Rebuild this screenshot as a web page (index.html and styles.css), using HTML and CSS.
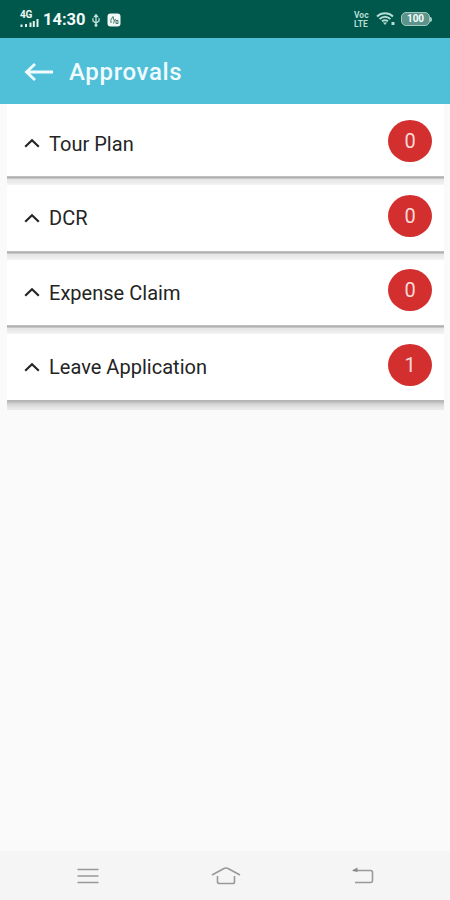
FILE: index.html
```html
<!DOCTYPE html>
<html lang="en">
<head>
<meta charset="utf-8">
<title>Approvals</title>
<link rel="stylesheet" href="styles.css">
</head>
<body>
<div class="screen">
  <div class="status">
    <div class="signal">
      <span class="net">4G</span>
      <svg width="19" height="8" viewBox="0 0 19 8"><path d="M1.500 5.500v2.500M6 5v3M10.500 3.500v4.500M13.800 2v6M17.500 0v8" stroke="#e4f3ef" stroke-width="2" fill="none"/></svg>
    </div>
    <span class="time">14:30</span>
    <svg class="usb" width="10" height="13" viewBox="0 0 10 15" fill="none" stroke="#c5e3dc" stroke-width="1.500"><path d="M5 2v11M1.500 5v3L5 10.500 8.500 8V5"/><path d="M3.300 3L5 .8 6.700 3z" fill="#c5e3dc"/><circle cx="5" cy="13" r="1" fill="#c5e3dc"/></svg>
    <svg class="app" width="14" height="14" viewBox="0 0 14 14"><rect x=".5" y=".5" width="13" height="13" rx="3" fill="#eef8f5"/><path d="M3.500 7.500L6 3.500l1 4 2-1M4 10V7.500M6.500 10.500l1-3M9 7.500h2v3H9z" fill="none" stroke="#47796f" stroke-width="1"/></svg>
    <span class="volte"><span>Voc</span><span>LTE</span></span>
    <svg class="wifi" width="20" height="14" viewBox="0 0 20 14" fill="none" stroke="#b4ddd3" stroke-width="1.900"><path d="M1 4.500C5.500.2 12.500.2 17 4.500M3.500 7c3.500-3 7.500-3 11 0M6 9.300c2-1.500 4-1.500 6 0"/><path d="M7 10.500h4l-2 2.500z" fill="#b4ddd3" stroke="none"/><rect x="15.500" y="10" width="3" height="3" fill="#b4ddd3" stroke="none"/></svg>
    <span class="battery">100</span><span class="cap"></span>
  </div>
  <header class="bar">
    <svg width="30" height="20" viewBox="0 0 30 20" fill="none" stroke="#f1fcff" stroke-width="2.800"><path d="M29 10H3M11 2L2.500 10l8.500 8"/></svg>
    <h1>Approvals</h1>
  </header>
  <main class="list">
    <div class="item"><div class="row"><svg class="chev" width="16" height="10" viewBox="0 0 16 10"><path d="M1.200 8.700L8 2.200l6.800 6.500"/></svg><span class="label">Tour Plan</span><span class="badge">0</span></div><div class="edge"></div></div>
    <div class="item"><div class="row"><svg class="chev" width="16" height="10" viewBox="0 0 16 10"><path d="M1.200 8.700L8 2.200l6.800 6.500"/></svg><span class="label">DCR</span><span class="badge">0</span></div><div class="edge"></div></div>
    <div class="item"><div class="row"><svg class="chev" width="16" height="10" viewBox="0 0 16 10"><path d="M1.200 8.700L8 2.200l6.800 6.500"/></svg><span class="label">Expense Claim</span><span class="badge">0</span></div><div class="edge"></div></div>
    <div class="item"><div class="row"><svg class="chev" width="16" height="10" viewBox="0 0 16 10"><path d="M1.200 8.700L8 2.200l6.800 6.500"/></svg><span class="label">Leave Application</span><span class="badge">1</span></div><div class="edge"></div></div>
  </main>
  <nav class="nav">
    <svg width="22" height="18" viewBox="0 0 22 18"><path d="M.5 2.500h21M.5 9h21M.5 15.500h21"/></svg>
    <svg width="30" height="20" viewBox="0 0 30 20"><path d="M1 9L12.500 2.700q2.500-1.300 5 0L29 9M6.500 10v6q0 1.500 2 1.500h13q2 0 2-1.500v-6"/></svg>
    <svg width="22" height="18" viewBox="0 0 22 18"><path d="M1 3.500h17.500q2 0 2 2v8q0 2-2 2H3"/><path class="tip" d="M0 3.500L5.500.5v4.500z"/></svg>
  </nav>
</div>
</body>
</html>
```
FILE: styles.css
```css
* { box-sizing: border-box; }
body { margin: 0; font-family: Roboto, "Liberation Sans", sans-serif; }
svg { display: block; flex: none; }
.screen { width: 450px; height: 900px; display: flex; flex-direction: column; background: #fafafa; overflow: hidden; }
.status { height: 38px; flex: none; background: #00574b; display: flex; align-items: center; padding: 0 18px 0 20px; color: #f2faf8; }
.signal { width: 19px; display: flex; flex-direction: column; }
.net { font-size: 10px; line-height: 8px; font-weight: 700; letter-spacing: -.3px; }
.time { margin-left: 4px; width: 43px; font-size: 16.5px; font-weight: 700; line-height: 20px; margin-top: 2px; white-space: nowrap; }
.usb { margin-left: 5px; margin-top: 2px; }
.app { margin-left: 6px; margin-top: 2px; }
.volte { margin-left: auto; width: 17px; display: flex; flex-direction: column; font-size: 8.5px; font-weight: 700; color: #b4ddd3; }
.volte span { line-height: 10px; height: 9px; }
.wifi { margin-left: 5px; }
.battery { margin-left: 5px; width: 29px; height: 14px; border: 1.5px solid #9fcbc0; border-radius: 5px; background: #5d938a; color: #f4fffc; font-size: 10px; line-height: 12px; font-weight: 700; text-align: center; }
.cap { width: 2px; height: 5px; background: #9fcbc0; border-radius: 0 2px 2px 0; }
.bar { height: 66px; flex: none; display: flex; align-items: center; padding: 1px 0 0 24px; background: #50bfd8; color: #f1fcff; }
h1 { margin: 1px 0 0 15px; font-size: 24px; line-height: 30px; font-weight: 500; letter-spacing: .65px; }
.list { flex: 1; padding: 0 6px 0 7px; }
.item { height: 74.6px; display: flex; flex-direction: column; }
.item:first-child { height: 81px; }
.row { flex: 1; background: #fff; display: flex; align-items: center; padding: 0 12px 0 17px; }
.item:first-child .row { padding-top: 6px; }
.chev { fill: none; stroke: #252525; stroke-width: 2.2; }
.label { margin: 1px 0 0 9px; font-size: 20px; line-height: 24px; color: #242424; letter-spacing: .02px; }
.badge { margin: 0 0 4px auto; width: 44px; height: 42px; border-radius: 50%; background: #d32f2f; color: #f8dada; font-size: 20px; line-height: 43px; text-align: center; }
.edge { height: 9px; flex: none; background: linear-gradient(#c8c8c8, #afafaf 16%, #bcbcbc 24%, #e6e6e6 38%, #ededed 75%, #f5f5f5); }
.item:last-child .edge { height: 10px; margin-bottom: -1px; background: linear-gradient(#b4b4b4, #b8b8b8 16%, #d2d2d2 38%, #e4e4e4 70%, #ececec); }
.nav { height: 49px; flex: none; display: flex; align-items: center; justify-content: space-between; padding: 1px 76px 0 77px; background: #f5f5f5; }
.nav svg { fill: none; stroke: #999; stroke-width: 1.6; }
.nav .tip { fill: #888; stroke: none; }
```
